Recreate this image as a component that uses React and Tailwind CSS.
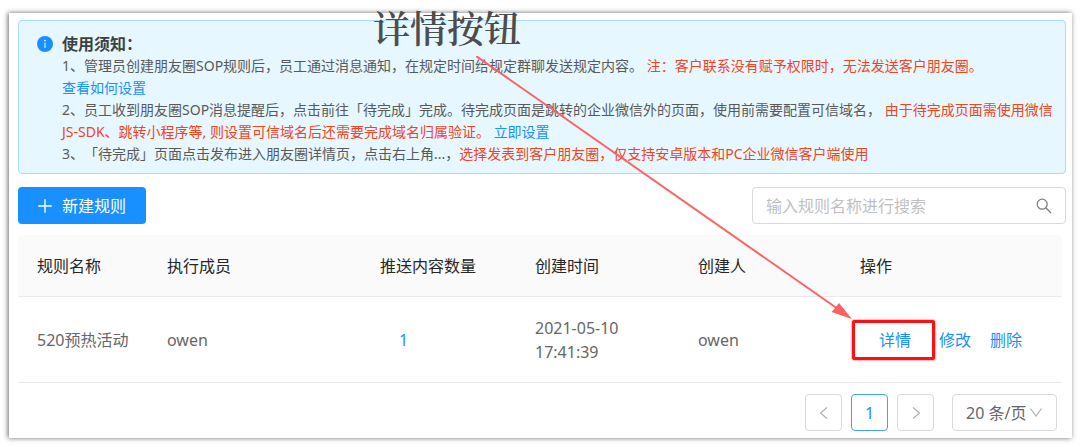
import { useState } from 'react'

const columns = [
    { key: 'name', label: '规则名称', width: 'w-[130px]' },
    { key: 'members', label: '执行成员', width: 'w-[213px]' },
    { key: 'count', label: '推送内容数量', width: 'w-[155px]' },
    { key: 'createdAt', label: '创建时间', width: 'w-[163px]' },
    { key: 'creator', label: '创建人', width: 'w-[162px]' },
    { key: 'actions', label: '操作', width: 'w-[221px]' },
]

const rules = [
    { id: 1, name: '520预热活动', members: 'owen', count: 1, createdAt: '2021-05-10 17:41:39', creator: 'owen' },
]

function InfoIcon() {
    return (
        <svg viewBox="0 0 16 16" className="w-4 h-4 mt-[3px] shrink-0" aria-hidden="true">
            <circle cx="8" cy="8" r="8" fill="#1890ff" />
            <circle cx="8" cy="4.6" r="0.9" fill="#fff" />
            <rect x="7.5" y="6.8" width="1" height="5.2" fill="#fff" />
        </svg>
    )
}

function Chevron({ d }) {
    return (
        <svg viewBox="0 0 14 14" className="w-[14px] h-[14px]" fill="none" stroke="#b0b0b0" strokeWidth="1.2" aria-hidden="true">
            <path d={d} />
        </svg>
    )
}

function Notice() {
    return (
        <section className="flex gap-[9px] pl-[18px] pr-2 pt-3 pb-2 rounded border border-[#a9dcff] bg-[#e6f7ff] text-sm leading-[22px] text-[#595959]">
            <InfoIcon />
            <div className="flex-1 [text-spacing-trim:space-all]">
                <h2 className="text-base leading-[22px] font-bold text-[#404040]">使用须知：</h2>
                <p>
                    1、管理员创建朋友圈SOP规则后，员工通过消息通知，在规定时间给规定群聊发送规定内容。{' '}
                    <span className="text-[#f5431d]">注：客户联系没有赋予权限时，无法发送客户朋友圈。</span>
                </p>
                <a href="#guide" className="block text-[#1890ff]">查看如何设置</a>
                <p>
                    2、员工收到朋友圈SOP消息提醒后，点击前往「待完成」完成。待完成页面是跳转的企业微信外的页面，使用前需要配置可信域名，{' '}
                    <span className="text-[#f5431d]">由于待完成页面需使用微信JS-SDK、跳转小程序等, 则设置可信域名后还需要完成域名归属验证。</span>{' '}
                    <a href="#domain" className="text-[#1890ff]">立即设置</a>
                </p>
                <p>
                    3、「待完成」页面点击发布进入朋友圈详情页，点击右上角...，
                    <span className="text-[#f5431d]">选择发表到客户朋友圈，仅支持安卓版本和PC企业微信客户端使用</span>
                </p>
            </div>
        </section>
    )
}

export default function App() {
    const [search, setSearch] = useState('')
    const list = rules.filter(r => r.name.includes(search))

    return (
        <div className="relative bg-white pt-[13px] pr-2 pb-[9px] pl-[9px] font-['Noto_Sans','Noto_Sans_CJK_SC',sans-serif] text-base text-[#666]">
            <main className="bg-white pl-[9px] pr-[6px] py-[7px] shadow-[-1px_0_5px_rgba(0,0,0,0.6)]">
                <Notice />

                {/* 工具栏 */}
                <div className="flex justify-between mt-[13px]">
                    <button type="button" className="flex items-center gap-2 h-[37px] pl-[18px] pr-5 rounded bg-[#1890ff] text-white">
                        <svg viewBox="0 0 16 16" className="w-[18px] h-[18px]" stroke="#fff" strokeWidth="1.2" aria-hidden="true">
                            <path d="M8 2v12M2 8h12" />
                        </svg>
                        新建规则
                    </button>
                    <label className="flex items-center w-[314px] h-[37px] px-[13px] rounded border border-[#d9d9d9]">
                        <input
                            type="text"
                            aria-label="搜索规则"
                            placeholder="输入规则名称进行搜索"
                            value={search}
                            onChange={(e) => setSearch(e.target.value)}
                            className="flex-1 min-w-0 outline-none placeholder:text-[#bfbfbf]"
                        />
                        <svg viewBox="0 0 16 16" className="w-4 h-4" fill="none" stroke="#7f7f7f" strokeWidth="1.3" aria-hidden="true">
                            <circle cx="6.2" cy="6.2" r="5" />
                            <path d="M9.8 9.8l5.2 5.2" />
                        </svg>
                    </label>
                </div>

                {/* 规则列表 */}
                <div className="mt-[11px] mr-1">
                    <table className="w-full table-fixed border-separate border-spacing-0 text-left">
                        <thead>
                            <tr className="h-[62px]">
                                {columns.map((col) => (
                                    <th
                                        key={col.key}
                                        className={`${col.width} pl-[19px] border-b border-[#ebebeb] bg-[#fafafa] font-normal text-[#262626] first:rounded-tl last:rounded-tr`}
                                    >
                                        {col.label}
                                    </th>
                                ))}
                            </tr>
                        </thead>
                        <tbody>
                            {list.map((rule) => (
                                <tr key={rule.id} className="h-[86px] *:px-[19px] *:border-b *:border-[#ebebeb]">
                                    <td className="whitespace-nowrap">{rule.name}</td>
                                    <td>{rule.members}</td>
                                    <td>
                                        <button type="button" className="px-[19px] text-[#1890ff]">{rule.count}</button>
                                    </td>
                                    <td>{rule.createdAt}</td>
                                    <td>{rule.creator}</td>
                                    <td>
                                        <div className="flex pl-[19px] text-[#1890ff]">
                                            <button type="button" className="relative mr-7">
                                                详情
                                                <span className="absolute -left-[27px] -right-6 -inset-y-2 border-[3px] border-[#fb1014] rounded-xs shadow-[0_0_2px_#fb1014]"></span>
                                            </button>
                                            <button type="button" className="mr-[19px]">修改</button>
                                            <button type="button">删除</button>
                                        </div>
                                    </td>
                                </tr>
                            ))}
                        </tbody>
                    </table>
                </div>

                {/* 分页 */}
                <nav className="flex justify-end gap-[9px] mt-[11px] mr-[9px]">
                    <button type="button" aria-label="上一页" className="grid place-items-center w-[37px] h-[37px] rounded border border-[#d9d9d9]">
                        <Chevron d="M10 1.5L3.5 7l6.5 5.5" />
                    </button>
                    <button type="button" className="w-[37px] h-[37px] rounded border border-[#40a0ff] text-[#1890ff]">1</button>
                    <button type="button" aria-label="下一页" className="grid place-items-center w-[37px] h-[37px] rounded border border-[#d9d9d9]">
                        <Chevron d="M4 1.5L10.5 7L4 12.5" />
                    </button>
                    <div className="relative ml-[9px]">
                        <select aria-label="每页条数" className="appearance-none w-[105px] h-[37px] pl-[13px] rounded border border-[#d9d9d9] bg-white">
                            <option>20 条/页</option>
                            <option>50 条/页</option>
                        </select>
                        <span className="absolute right-[14px] top-3 pointer-events-none">
                            <Chevron d="M1.5 2.5L7 10l5.5-7.5" />
                        </span>
                    </div>
                </nav>
            </main>

            {/* 标注 */}
            <strong className="absolute left-[373px] top-[7px] text-[37px] leading-10 font-semibold text-[#4d4d4d] font-['Noto_Serif_CJK_SC','Noto_Sans_CJK_SC',serif]">
                详情按钮
            </strong>
            <svg viewBox="0 0 376 263" className="absolute left-[476px] top-[56px] w-[376px] h-[263px] pointer-events-none" aria-hidden="true">
                <path d="M0 0L362 253" stroke="#ff6060" strokeWidth="2" />
                <path d="M376 263L363 247L359.5 251.500L355.5 256Z" fill="#ff6060" />
            </svg>
        </div>
    )
}
